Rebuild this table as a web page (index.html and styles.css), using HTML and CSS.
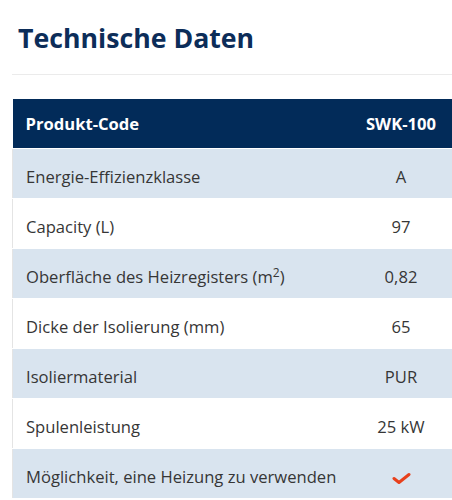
FILE: index.html
```html
<!DOCTYPE html>
<html lang="de">
<head>
<meta charset="utf-8">
<link rel="stylesheet" href="styles.css">
</head>
<body>
<section class="specs">
  <h2 class="specs-title">Technische Daten</h2>
  <hr class="specs-divider">
  <table class="specs-table">
    <thead>
      <tr><th class="col-label">Produkt-Code</th><th class="col-value">SWK-100</th></tr>
    </thead>
    <tbody>
      <tr class="alt"><td class="col-label">Energie-Effizienzklasse</td><td class="col-value">A</td></tr>
      <tr><td class="col-label">Capacity (L)</td><td class="col-value">97</td></tr>
      <tr class="alt"><td class="col-label">Oberfläche des Heizregisters (m<sup>2</sup>)</td><td class="col-value">0,82</td></tr>
      <tr><td class="col-label">Dicke der Isolierung (mm)</td><td class="col-value">65</td></tr>
      <tr class="alt"><td class="col-label">Isoliermaterial</td><td class="col-value">PUR</td></tr>
      <tr><td class="col-label">Spulenleistung</td><td class="col-value">25 kW</td></tr>
      <tr class="alt"><td class="col-label">Möglichkeit, eine Heizung zu verwenden</td><td class="col-value"><svg class="check" width="19" height="13" viewBox="0 0 19 13"><path d="M2 6.5 L7 10.5 L17 2.5" fill="none" stroke="#e8401c" stroke-width="3" stroke-linecap="round" stroke-linejoin="round"/></svg></td></tr>
    </tbody>
  </table>
</section>
</body>
</html>
```
FILE: styles.css
```css
html, body {
  margin: 0;
  padding: 0;
  background: #ffffff;
}
body {
  font-family: "Open Sans", "DejaVu Sans", sans-serif;
  overflow: hidden;
}
.specs {
  padding: 0 0 0 12px;
}
.specs-title {
  margin: 0;
  padding: 18px 0 0 6px;
  font-size: 26.7px;
  line-height: 40px;
  font-weight: 700;
  color: #0c2d59;
}
.specs-divider {
  border: 0;
  border-top: 1px solid #ebebeb;
  margin: 16px 0 0 0;
  height: 0;
}
.specs-table {
  margin-top: 24px;
  width: 440px;
  border-collapse: collapse;
  font-size: 16.6px;
  color: #363636;
}
.specs-table th,
.specs-table td {
  height: 49px;
  padding: 0 0 0 13px;
  vertical-align: middle;
  border-bottom: 1px solid #ffffff;
}
.specs-table tbody td {
  height: 44px;
  padding-top: 5px;
}
.specs-table thead th {
  background: #022b59;
  color: #ffffff;
  font-weight: 700;
  text-align: left;
}
.specs-table tbody tr {
  background: #ffffff;
}
.specs-table tbody tr.alt {
  background: #d9e4ef;
}
.specs-table tbody td.col-label {
  border-left: 1px solid #e4e4e4;
}
.specs-table .col-value {
  width: 102px;
  padding-left: 0;
  text-align: center;
}
sup {
  font-size: 12px;
  line-height: 0;
  vertical-align: 6px;
}
.check {
  display: inline-block;
  vertical-align: middle;
}
```
